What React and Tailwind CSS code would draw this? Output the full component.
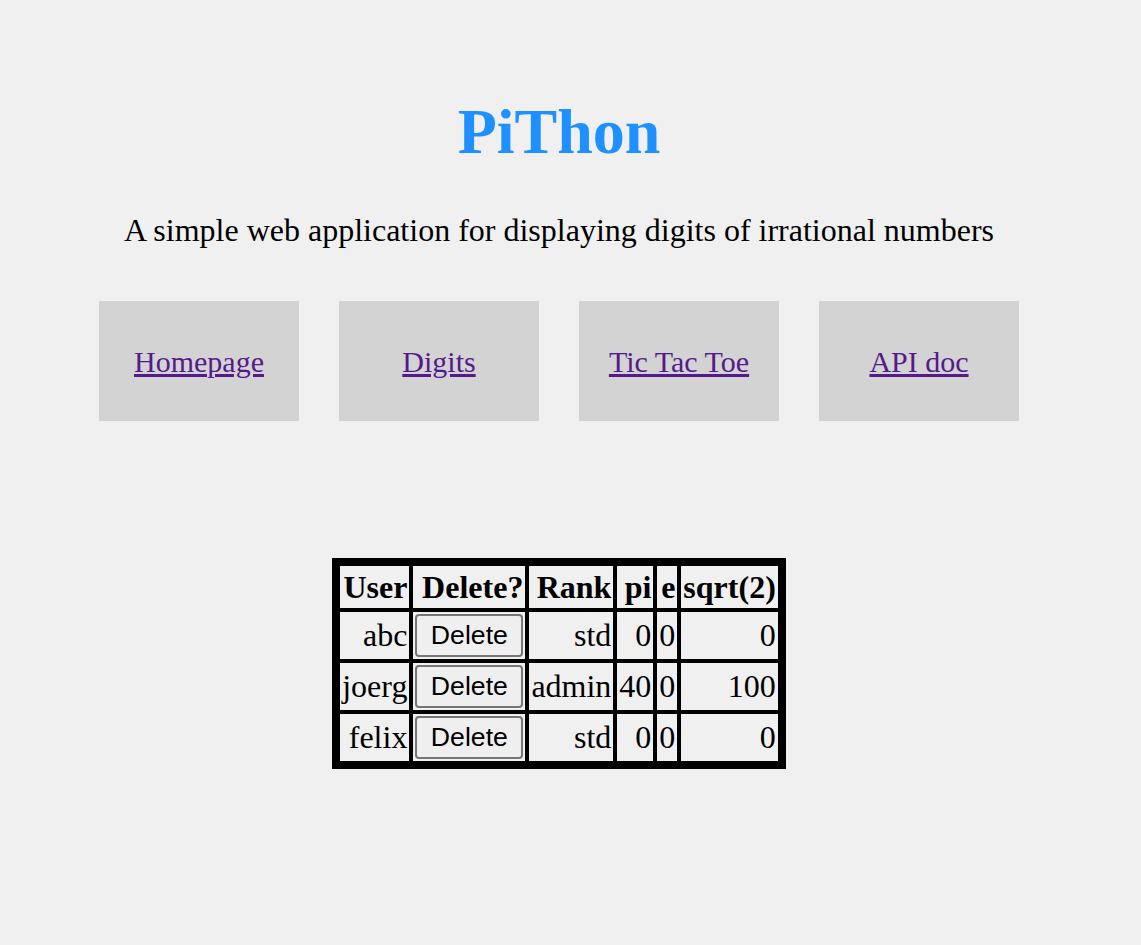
export default function App() {
  const users = [
    { name: 'abc', rank: 'std', pi: 0, e: 0, sqrt2: 0 },
    { name: 'joerg', rank: 'admin', pi: 40, e: 0, sqrt2: 100 },
    { name: 'felix', rank: 'std', pi: 0, e: 0, sqrt2: 0 },
  ];
  const links = ['Homepage', 'Digits', 'Tic Tac Toe', 'API doc'];

  return (
    <div className="min-h-[945px] bg-[#f0f0f0] pr-[23px] font-['Liberation_Serif',serif] text-black">
      <h1 className="pt-[96px] text-center text-[64px] font-bold leading-[71px] text-[#1e90ff]">PiThon</h1>
      <p className="mt-[45px] text-center text-[32px] leading-[37px]">
        A simple web application for displaying digits of irrational numbers
      </p>

      <nav className="mt-[52px] flex justify-center gap-[40px]">
        {links.map((l) => (
          <div key={l} className="flex h-[120px] w-[200px] items-center justify-center bg-[#d3d3d3]">
            <a href="#" className="text-[30px] text-[#551a8b] underline">{l}</a>
          </div>
        ))}
      </nav>

      <div className="mt-[137px] flex justify-center">
        <table className="border-separate border-spacing-[4px] border-4 border-black bg-black text-right text-[32px] leading-[37px]">
          <thead>
            <tr>
              {['User', 'Delete?', 'Rank', 'pi', 'e', 'sqrt(2)'].map((h) => (
                <th key={h} className="bg-[#f0f0f0] px-[2px] py-[2px] text-right font-bold leading-[38px]">{h}</th>
              ))}
            </tr>
          </thead>
          <tbody>
            {users.map((u) => (
              <tr key={u.name}>
                <td className="bg-[#f0f0f0] px-[2px] py-[2px]">{u.name}</td>
                <td className="bg-[#f0f0f0] px-[2px] py-[2px] text-center">
                  <button className="h-[43px] w-[108px] rounded-[4px] border-2 border-[#767676] bg-[#efefef] font-['Liberation_Sans',sans-serif] text-[26.67px] leading-none">
                    Delete
                  </button>
                </td>
                <td className="bg-[#f0f0f0] px-[2px] py-[2px]">{u.rank}</td>
                <td className="bg-[#f0f0f0] px-[2px] py-[2px]">{u.pi}</td>
                <td className="bg-[#f0f0f0] px-[2px] py-[2px]">{u.e}</td>
                <td className="bg-[#f0f0f0] px-[2px] py-[2px]">{u.sqrt2}</td>
              </tr>
            ))}
          </tbody>
        </table>
      </div>
    </div>
  );
}
